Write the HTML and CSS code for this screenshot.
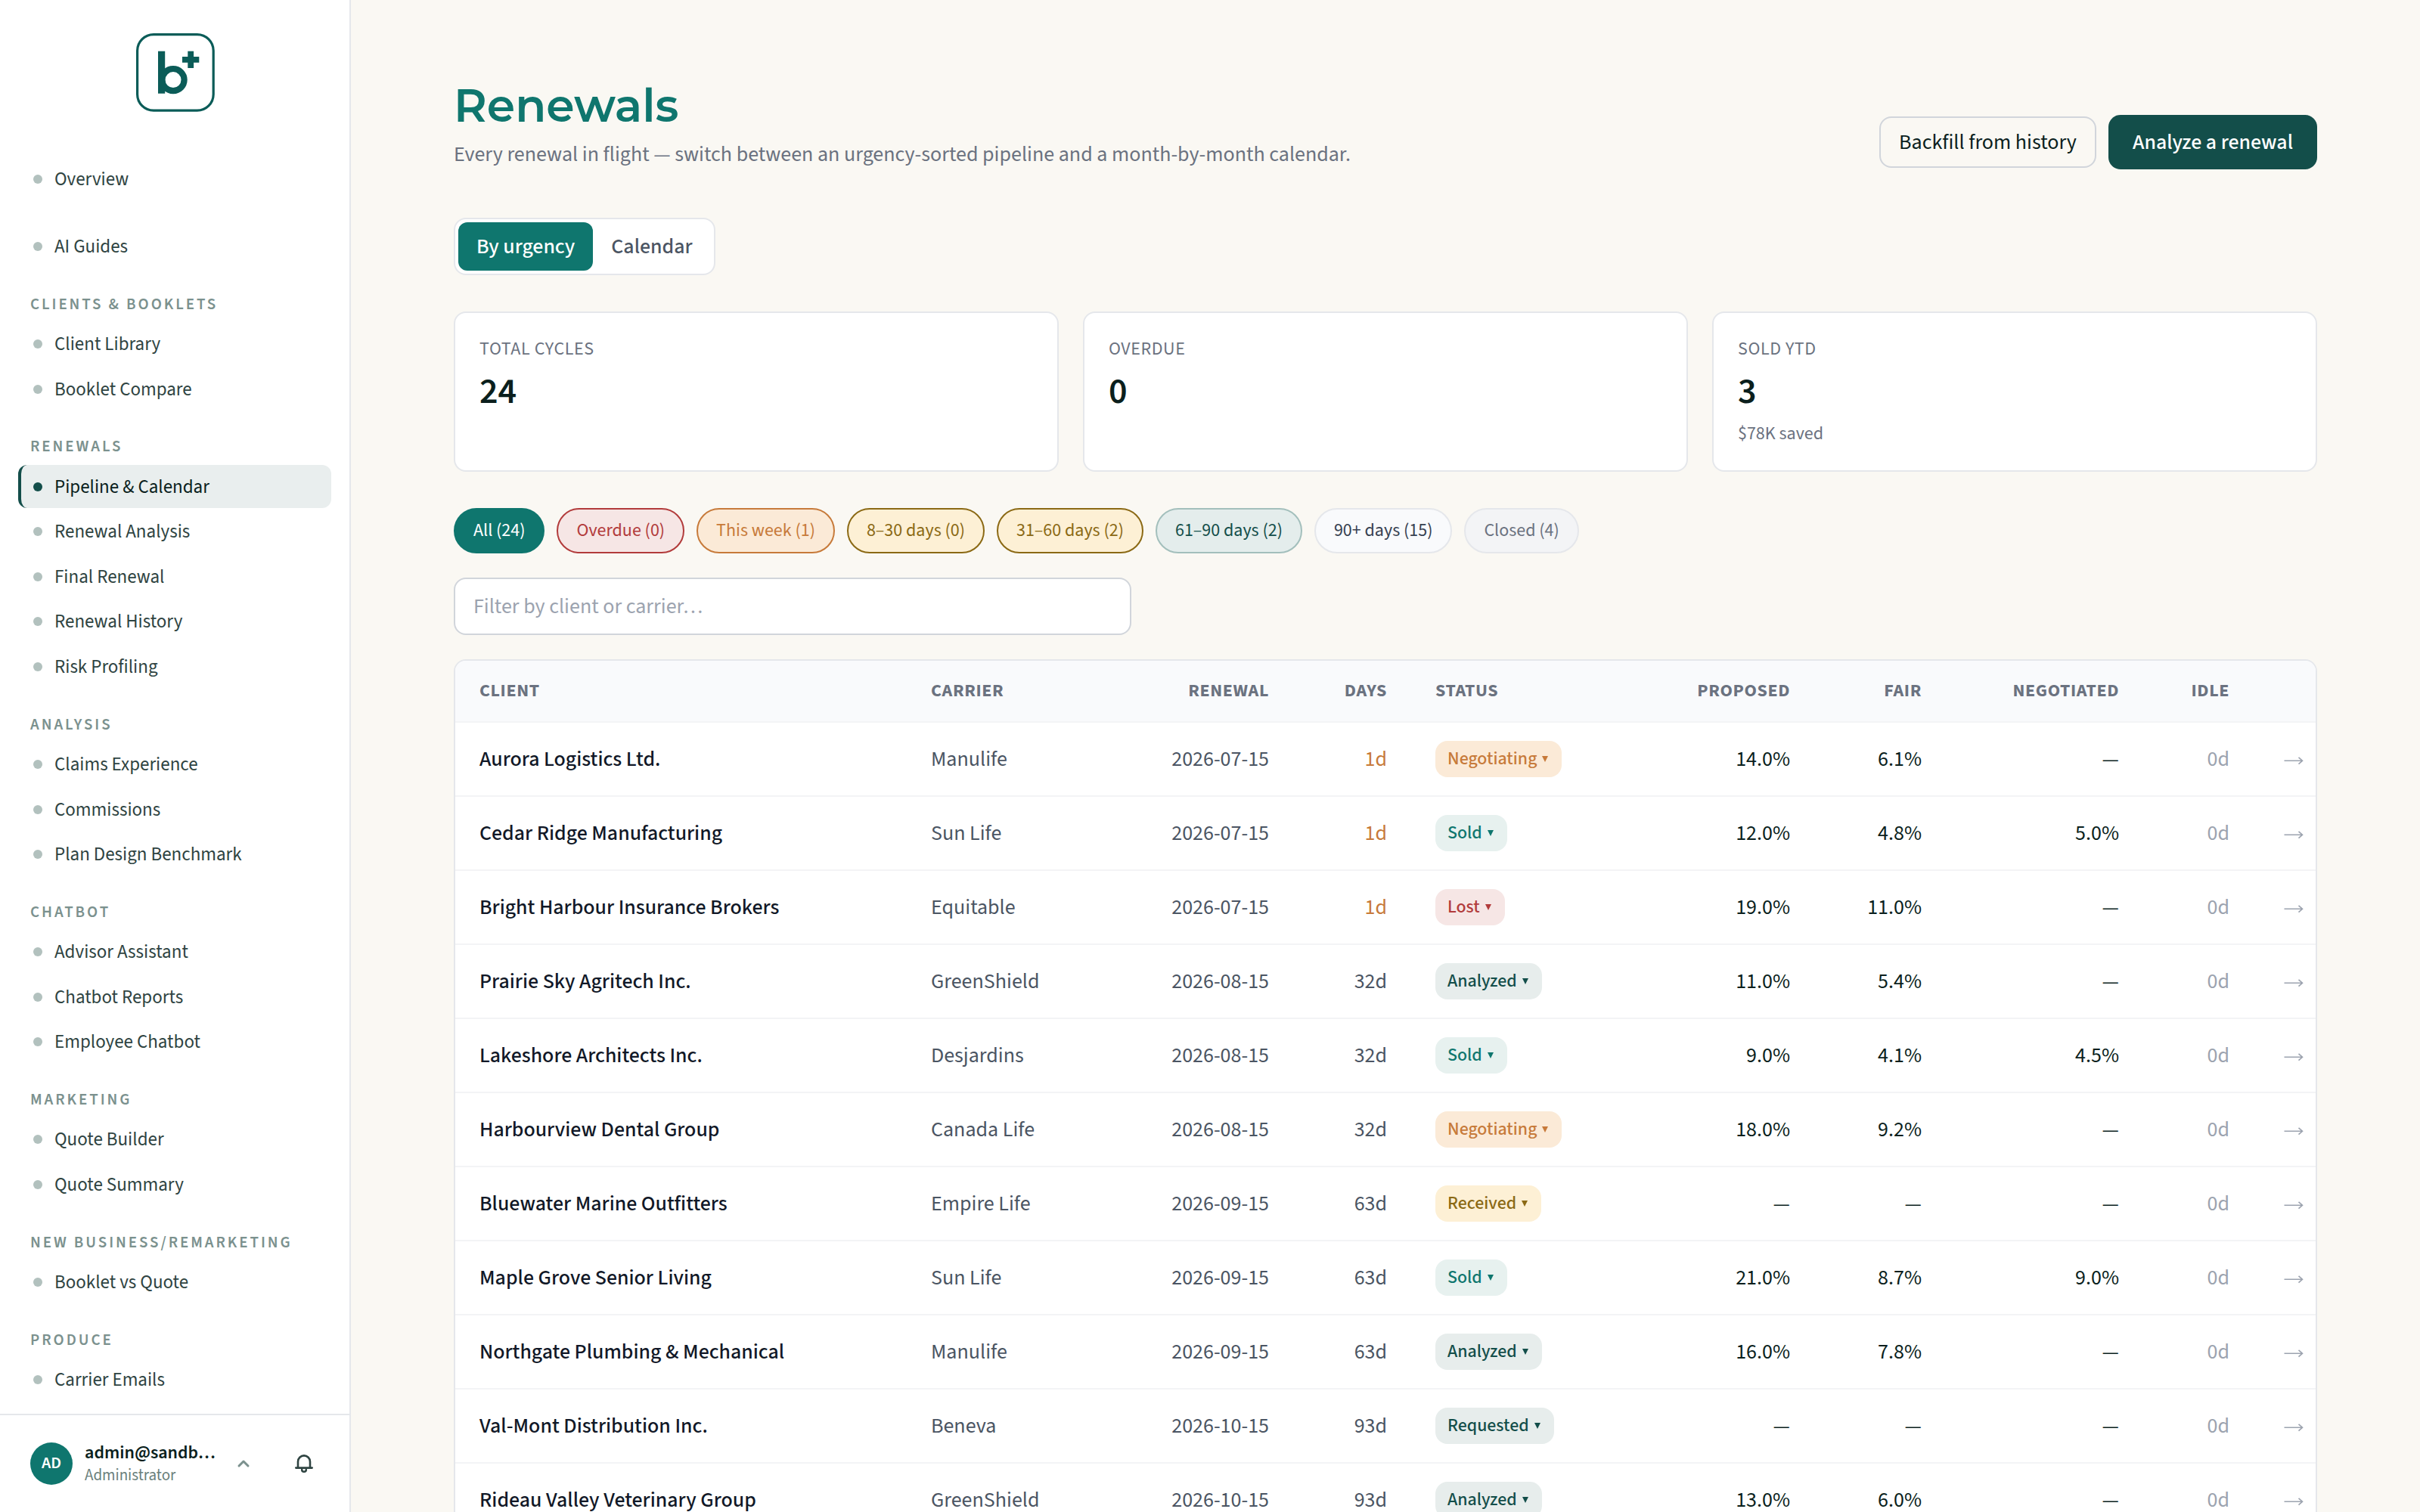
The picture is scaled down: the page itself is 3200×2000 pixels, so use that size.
FILE: index.html
```html
<!DOCTYPE html>
<html lang="en">
<head>
    <meta charset="UTF-8">
    <title>Renewals</title>
    <meta name="viewport" content="width=device-width, initial-scale=1.0">
    <link rel="stylesheet" href="styles.css">
</head>
<body>
    <aside class="sidebar">
        <div class="brand">
            <svg class="brand-mark" viewBox="0 0 104 104" fill="none">
                <rect x="1.6" y="1.6" width="100.6" height="100.6" rx="21.5" stroke="#0b5c58" stroke-width="3.2"/>
                <rect x="29" y="23.7" width="9.2" height="56" fill="#0b5c58"/>
                <circle cx="49" cy="61.6" r="14.6" stroke="#0b5c58" stroke-width="8.2"/>
                <rect x="61" y="31" width="22.3" height="7.8" fill="#0b5c58"/>
                <rect x="68.3" y="23.7" width="7.8" height="22.3" fill="#0b5c58"/>
            </svg>
        </div>
        <nav class="nav">
            <a class="nav-item">Overview</a>
            <a class="nav-item nav-gap">AI Guides</a>
            <div class="nav-label">Clients &amp; Booklets</div>
            <a class="nav-item">Client Library</a>
            <a class="nav-item">Booklet Compare</a>
            <div class="nav-label">Renewals</div>
            <a class="nav-item active">Pipeline &amp; Calendar</a>
            <a class="nav-item">Renewal Analysis</a>
            <a class="nav-item">Final Renewal</a>
            <a class="nav-item">Renewal History</a>
            <a class="nav-item">Risk Profiling</a>
            <div class="nav-label">Analysis</div>
            <a class="nav-item">Claims Experience</a>
            <a class="nav-item">Commissions</a>
            <a class="nav-item">Plan Design Benchmark</a>
            <div class="nav-label">Chatbot</div>
            <a class="nav-item">Advisor Assistant</a>
            <a class="nav-item">Chatbot Reports</a>
            <a class="nav-item">Employee Chatbot</a>
            <div class="nav-label">Marketing</div>
            <a class="nav-item">Quote Builder</a>
            <a class="nav-item">Quote Summary</a>
            <div class="nav-label">New Business/Remarketing</div>
            <a class="nav-item">Booklet vs Quote</a>
            <div class="nav-label">Produce</div>
            <a class="nav-item">Carrier Emails</a>
        </nav>
        <div class="account">
            <div class="avatar">AD</div>
            <div class="account-text">
                <div class="account-name">admin@sandb…</div>
                <div class="account-role">Administrator</div>
            </div>
            <svg class="caret" viewBox="0 0 24 24" fill="none" stroke="#7b918e" stroke-width="3" stroke-linecap="round" stroke-linejoin="round"><path d="M6 15l6-6 6 6"/></svg>
            <svg class="bell" viewBox="0 0 32 32" fill="none" stroke="#2f4442" stroke-width="2.6" stroke-linecap="round" stroke-linejoin="round">
                <path d="M5.3 21.6h21.4M8 21V13.4a8 8 0 0 1 16 0V21"/>
                <path d="M13.2 24a2.8 2.8 0 0 0 5.6 0"/>
            </svg>
        </div>
    </aside>

    <main class="main">
        <header class="page-head">
            <div>
                <h1>Renewals</h1>
                <p class="subtitle">Every renewal in flight — switch between an urgency-sorted pipeline and a month-by-month calendar.</p>
            </div>
            <div class="actions">
                <button class="btn btn-outline">Backfill from history</button>
                <button class="btn btn-primary">Analyze a renewal</button>
            </div>
        </header>

        <div class="tabs">
            <button class="tab active">By urgency</button>
            <button class="tab">Calendar</button>
        </div>

        <section class="stats">
            <div class="stat">
                <div class="stat-label">Total cycles</div>
                <div class="stat-value">24</div>
            </div>
            <div class="stat">
                <div class="stat-label">Overdue</div>
                <div class="stat-value">0</div>
            </div>
            <div class="stat">
                <div class="stat-label">Sold YTD</div>
                <div class="stat-value">3</div>
                <div class="stat-note">$78K saved</div>
            </div>
        </section>

        <div class="chips">
            <button class="chip chip-all">All (24)</button>
            <button class="chip chip-red">Overdue (0)</button>
            <button class="chip chip-orange">This week (1)</button>
            <button class="chip chip-yellow">8–30 days (0)</button>
            <button class="chip chip-yellow">31–60 days (2)</button>
            <button class="chip chip-teal">61–90 days (2)</button>
            <button class="chip chip-light">90+ days (15)</button>
            <button class="chip chip-gray">Closed (4)</button>
        </div>

        <input class="filter" type="text" placeholder="Filter by client or carrier…">

        <div class="table-wrap">
            <table>
                <colgroup>
                    <col class="w-client"><col class="w-carrier"><col class="w-renewal"><col class="w-days"><col class="w-status">
                    <col class="w-proposed"><col class="w-fair"><col class="w-negotiated"><col class="w-idle"><col class="w-go">
                </colgroup>
                <thead>
                    <tr>
                        <th>Client</th><th>Carrier</th><th class="num">Renewal</th><th class="num">Days</th><th>Status</th>
                        <th class="num">Proposed</th><th class="num">Fair</th><th class="num">Negotiated</th><th class="num">Idle</th><th></th>
                    </tr>
                </thead>
                <tbody id="rows"></tbody>
            </table>
        </div>
    </main>

    <script src="script.js"></script>
</body>
</html>
```
FILE: styles.css
```css
* {
    box-sizing: border-box;
}
body {
    margin: 0;
    height: 2000px;
    display: flex;
    overflow: hidden;
    background: #faf8f3;
    color: #0b1f1d;
    font-family: "Source Sans 3", "Noto Sans CJK SC", "Noto Sans", sans-serif;
    font-size: 28px;
    line-height: 1.6;
}
button, input {
    font: inherit;
    color: inherit;
    margin: 0;
}

/* sidebar */
.sidebar {
    width: 464px;
    height: 2000px;
    flex: none;
    display: flex;
    flex-direction: column;
    background: #fff;
    border-right: 2px solid #e5e7eb;
}
.brand {
    display: flex;
    justify-content: center;
    padding: 44px 0 60px 2px;
}
.brand-mark {
    width: 104px;
    height: 104px;
}
.nav {
    flex: 1;
    min-height: 0;
    overflow: hidden;
    padding: 0 24px;
}
.nav-item {
    display: flex;
    align-items: center;
    gap: 16px;
    height: 57.6px;
    margin-bottom: 2px;
    padding-left: 16px;
    border-left: 4px solid transparent;
    border-radius: 12px;
    color: #2f4442;
    font-size: 25px;
}
.nav-item::before {
    content: "";
    width: 12px;
    height: 12px;
    border-radius: 50%;
    background: #b2c1be;
}
.nav-item.active {
    background: #e9eeee;
    border-left-color: #134e4a;
    color: #0b1f1d;
}
.nav-item.active::before {
    background: #134e4a;
}
.nav-gap {
    margin-top: 31.7px;
}
.nav-label {
    padding: 28px 16px 6.4px;
    height: 69.4px;
    line-height: 35px;
    font-size: 21px;
    font-weight: 600;
    letter-spacing: 0.14em;
    text-transform: uppercase;
    color: #7b918e;
    white-space: nowrap;
}
.account {
    display: flex;
    align-items: center;
    height: 130px;
    padding: 0 40px;
    border-top: 2px solid #e5e7eb;
}
.avatar {
    width: 56px;
    height: 56px;
    flex: none;
    display: flex;
    align-items: center;
    justify-content: center;
    border-radius: 50%;
    background: #0f766e;
    color: #fff;
    font-size: 22px;
    font-weight: 600;
}
.account-text {
    width: 186px;
    margin-left: 16px;
}
.account-name {
    font-size: 24px;
    line-height: 30px;
    font-weight: 600;
}
.account-role {
    font-size: 21px;
    line-height: 28px;
    color: #6b7f7c;
}
.caret {
    width: 24px;
    height: 24px;
    margin-left: 12px;
}
.bell {
    width: 32px;
    height: 32px;
    margin-left: 52px;
}

/* page */
.main {
    flex: 1;
    min-width: 0;
    padding: 100px 136px 0;
}
.page-head {
    display: flex;
    justify-content: space-between;
    height: 188px;
}
h1 {
    margin: 0;
    font-family: Montserrat, Inter, sans-serif;
    font-size: 60px;
    font-weight: 600;
    line-height: 80px;
    color: #0f766e;
}
.subtitle {
    margin: 2px 0 0;
    line-height: 44px;
    color: #6b7280;
}
.actions {
    display: flex;
    align-items: center;
    gap: 16px;
    height: 72px;
    margin-top: 52px;
}
.btn {
    border-radius: 16px;
    font-weight: 500;
    line-height: 40px;
}
.btn-outline {
    width: 287px;
    height: 68px;
    padding: 0;
    border: 2px solid #d1d5db;
    background: transparent;
    font-weight: 400;
}
.btn-primary {
    width: 276px;
    height: 72px;
    padding: 0;
    border: 0;
    background: #134e4a;
    color: #fff;
}
.tabs {
    display: inline-flex;
    height: 76px;
    padding: 4px;
    border: 2px solid #e5e7eb;
    border-radius: 16px;
    background: #fff;
}
.tab {
    padding: 0 24px;
    border: 0;
    border-radius: 12px;
    background: transparent;
    font-weight: 500;
    color: #4b5563;
}
.tab.active {
    background: #0f766e;
    color: #fff;
}
.stats {
    display: grid;
    grid-template-columns: repeat(3, 1fr);
    gap: 32px;
    height: 212px;
    margin-top: 48px;
}
.stat {
    padding: 29px 32px;
    border: 2px solid #e5e7eb;
    border-radius: 16px;
    background: #fff;
}
.stat-label {
    font-size: 24px;
    line-height: 38px;
    letter-spacing: 0.025em;
    text-transform: uppercase;
    color: #6b7280;
}
.stat-value {
    font-size: 48px;
    line-height: 74px;
    font-weight: 600;
}
.stat-note {
    font-size: 24px;
    line-height: 38px;
    color: #6b7280;
}
.chips {
    display: flex;
    gap: 16px;
    margin-top: 48px;
}
.chip {
    height: 60px;
    padding: 0 24px;
    border: 2px solid;
    border-radius: 30px;
    font-size: 24px;
    line-height: 40px;
    white-space: nowrap;
}
.chip-all { background: #0f766e; border-color: #0f766e; color: #fff; }
.chip-red { background: #f6e6e5; border-color: #b23b3b; color: #b23b3b; }
.chip-orange { background: #fbead7; border-color: #c77a3a; color: #c77a3a; }
.chip-yellow { background: #fdf0d5; border-color: #8b6914; color: #8b6914; }
.chip-teal { background: #e4edec; border-color: #a3bfbc; color: #134e4a; }
.chip-light { background: #f9fafc; border-color: #e5e7eb; color: #374151; }
.chip-gray { background: #f3f4f6; border-color: #e5e7eb; color: #6b7280; }
.filter {
    display: block;
    width: 896px;
    height: 76px;
    margin-top: 32px;
    padding: 0 24px;
    border: 2px solid #d1d5db;
    border-radius: 16px;
    background: #fff;
}
.filter::placeholder {
    color: #9ca3af;
}

/* renewals table */
.table-wrap {
    margin-top: 32px;
    border: 2px solid #e5e7eb;
    border-radius: 16px 16px 0 0;
    background: #fff;
    overflow: hidden;
}
table {
    width: 100%;
    table-layout: fixed;
    border-collapse: separate;
    border-spacing: 0;
}
.w-client { width: 597px; }
.w-carrier { width: 281px; }
.w-renewal { width: 230px; }
.w-days { width: 156px; }
.w-status { width: 283px; }
.w-proposed { width: 250px; }
.w-fair { width: 174px; }
.w-negotiated { width: 261px; }
.w-idle { width: 146px; }
th, td {
    padding: 0 32px;
    border-bottom: 2px solid #f3f4f6;
    text-align: left;
    white-space: nowrap;
}
th {
    height: 82px;
    background: #f9fafc;
    font-size: 24px;
    font-weight: 700;
    letter-spacing: 0.025em;
    text-transform: uppercase;
    color: #6b7280;
}
td {
    height: 98px;
}
.num {
    text-align: right;
}
.client {
    font-weight: 500;
    color: #111827;
}
.muted {
    color: #4b5563;
}
.soon {
    color: #c77a3a;
}
.faint {
    color: #9ca3af;
}
.go {
    padding: 0 16px 0 0;
    text-align: right;
    color: #9ca3af;
}
.go svg {
    display: block;
    margin-left: auto;
    width: 26px;
    height: 20px;
}
.pill {
    display: inline-flex;
    align-items: center;
    gap: 7px;
    height: 48px;
    padding: 0 18px 0 16px;
    border-radius: 16px;
    vertical-align: middle;
    font-size: 24px;
    font-weight: 500;
    line-height: 40px;
}
.pill::after {
    content: "";
    border: 4px solid transparent;
    border-top: 8px solid currentColor;
    border-bottom: 0;
}
.negotiating { background: #fbead7; color: #c77a3a; }
.sold { background: #e7f1ef; color: #0f766e; }
.lost { background: #f6e6e5; color: #b23b3b; }
.analyzed, .requested { background: #e7edec; color: #134e4a; }
.received { background: #fdf0d5; color: #8b6914; }
```
FILE: script.js
```js
// client, carrier, renewal, days, status, proposed, fair, negotiated
const renewals = [
    ["Aurora Logistics Ltd.", "Manulife", "2026-07-15", 1, "Negotiating", "14.0%", "6.1%", "—"],
    ["Cedar Ridge Manufacturing", "Sun Life", "2026-07-15", 1, "Sold", "12.0%", "4.8%", "5.0%"],
    ["Bright Harbour Insurance Brokers", "Equitable", "2026-07-15", 1, "Lost", "19.0%", "11.0%", "—"],
    ["Prairie Sky Agritech Inc.", "GreenShield", "2026-08-15", 32, "Analyzed", "11.0%", "5.4%", "—"],
    ["Lakeshore Architects Inc.", "Desjardins", "2026-08-15", 32, "Sold", "9.0%", "4.1%", "4.5%"],
    ["Harbourview Dental Group", "Canada Life", "2026-08-15", 32, "Negotiating", "18.0%", "9.2%", "—"],
    ["Bluewater Marine Outfitters", "Empire Life", "2026-09-15", 63, "Received", "—", "—", "—"],
    ["Maple Grove Senior Living", "Sun Life", "2026-09-15", 63, "Sold", "21.0%", "8.7%", "9.0%"],
    ["Northgate Plumbing & Mechanical", "Manulife", "2026-09-15", 63, "Analyzed", "16.0%", "7.8%", "—"],
    ["Val-Mont Distribution Inc.", "Beneva", "2026-10-15", 93, "Requested", "—", "—", "—"],
    ["Rideau Valley Veterinary Group", "GreenShield", "2026-10-15", 93, "Analyzed", "13.0%", "6.0%", "—"]
];

const arrow = '<svg viewBox="0 0 26 20" fill="none" stroke="currentColor" stroke-width="1.6"><path d="M.5 12.2h24M19.5 7.8l5 4.4-5 4.4"/></svg>';

document.getElementById("rows").innerHTML = renewals.map(r => `
    <tr>
        <td class="client">${r[0].replace("&", "&amp;")}</td>
        <td class="muted">${r[1]}</td>
        <td class="num muted">${r[2]}</td>
        <td class="num ${r[3] <= 7 ? "soon" : "muted"}">${r[3]}d</td>
        <td><span class="pill ${r[4].toLowerCase()}">${r[4]}</span></td>
        <td class="num">${r[5]}</td>
        <td class="num">${r[6]}</td>
        <td class="num">${r[7]}</td>
        <td class="num faint">0d</td>
        <td class="go">${arrow}</td>
    </tr>`).join("");
```
